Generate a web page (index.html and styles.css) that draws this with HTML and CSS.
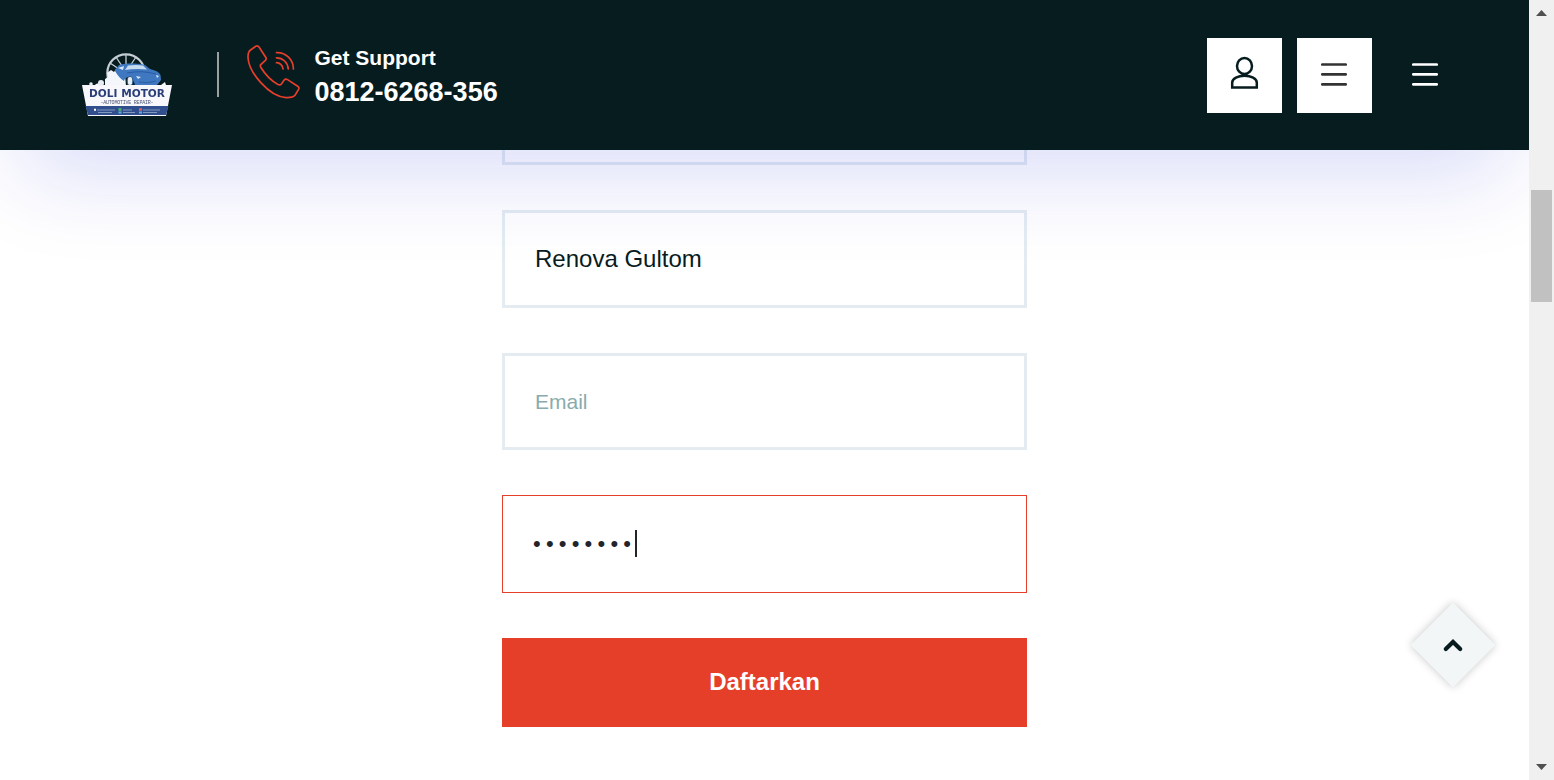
FILE: index.html
```html
<!DOCTYPE html>
<html lang="id">
<head>
<meta charset="utf-8">
<title>Doli Motor</title>
<link rel="stylesheet" href="styles.css">
</head>
<body>
<div class="page">
  <header class="header">
    <svg class="logo" width="92" height="66" viewBox="0 0 92 66">
      <g fill="none" stroke="#c5ced6">
        <circle cx="45" cy="22" r="18.7" stroke-width="2.2"/>
        <path d="M45 4v16M29 12l12 8M35 6l8 12M55 6l-8 12M26 23h14" stroke-width="1.3"/>
      </g>
      <path d="M24 35v-7l3-2-1-4 4-3 3 2 2-3 3 3 6 3 1 11z" fill="#f3f6fb"/>
      <path d="M34 19l4-5q6-2 11-1.500q10-.5 15 1.500l5 4q9 2 10.500 6l.5 5-4 5q-10 1.500-22 0-2-7-6-8-4 0-5 4-5-3-9-10z" fill="#3f78c0"/>
      <path d="M44 19l3-4.500q8-1 15 0l4 4q-12-1-22 .5z" fill="#c8dcf0"/>
      <path d="M37 17l6-2-1 4z" fill="#d9e9f7"/>
      <path d="M46 22q15-3 29 1M58 31q8 2 17-1" fill="none" stroke="#2a5ca3" stroke-width="1"/>
      <path d="M55 25l5 1-3 2zM75 24l3 1-2 2z" fill="#d9e9f7"/>
      <ellipse cx="49" cy="30" rx="2.800" ry="4.500" fill="#e8eef5" stroke="#315989"/>
      <path d="M1 34h13l1-1q4-2 6 1h59l4-3 1 3h6l-6 31H7z" fill="#f8f8fc"/>
      <circle cx="20" cy="32" r="3" fill="#e8edf4"/>
      <circle cx="10" cy="33" r="1.800" fill="#e8edf4"/>
      <path d="M4.500 55h83L85 64H7z" fill="#304f8c"/>
      <text class="logo-name" x="46" y="46" textLength="76" lengthAdjust="spacingAndGlyphs">DOLI MOTOR</text>
      <text class="logo-sub" x="46" y="52.500" textLength="53">-AUTOMOTIVE REPAIR-</text>
      <path d="M16 59h18M17 61.500h14M42 59h9M42 61.500h12M62 59h17M62 61.500h14" stroke="#8497bd" stroke-width="1"/>
      <path d="M13 58.800h2" stroke="#fff" stroke-width="2"/>
      <path d="M37.500 58.500h3" stroke="#51bd66" stroke-width="2.500"/>
      <path d="M37.500 61.500h3M58 61.500h3" stroke="#5baee0" stroke-width="2"/>
      <path d="M58 58.500h3" stroke="#df625d" stroke-width="2.500"/>
    </svg>
    <span class="divider"></span>
    <svg class="phone" width="56" height="56" viewBox="0 0 56 56">
      <path d="M4.500 6L9.800 2.300Q11.700 1.300 13 3.100L20 13.700Q20.600 15 19.400 16.300L14.800 20.500Q13.800 21.700 14.900 23.500Q22 35 32 40.500Q34.200 41.500 35.400 39.900L38 36.200Q39.400 34.500 41.200 35.400L51.700 42.200Q53.600 43.500 52.700 45.100L49.200 51Q47.200 53.800 40 53.600C23 52.800 2.600 28 2 13.500Q1.800 8 4.500 6Z"/>
      <path d="M30.500 8.600A16.200 16.200 0 0 1 47.400 25M30.500 13.800A11.500 11.500 0 0 1 42.200 25M30.500 18.700A6.500 6.500 0 0 1 37 25"/>
    </svg>
    <div class="support">
      <span class="support-label">Get Support</span>
      <span class="support-number">0812-6268-356</span>
    </div>
    <nav class="actions">
      <a class="action action-user"><svg width="32" height="36" viewBox="0 0 32 36"><ellipse cx="15.500" cy="11" rx="7.500" ry="8"/><path d="M3.200 32.400V27.500C3.200 23.300 9 20.700 15.500 20.700S27.800 23.300 27.800 27.500v4.900z"/></svg></a>
      <a class="action action-menu"><svg width="26" height="24" viewBox="0 0 26 24"><path d="M1.300 1.500h23.400M1.300 11.300h23.400M1.300 21.300h23.400"/></svg></a>
      <a class="action action-menu action-plain"><svg width="26" height="24" viewBox="0 0 26 24"><path d="M1.300 1.500h23.400M1.300 11.300h23.400M1.300 21.300h23.400"/></svg></a>
    </nav>
  </header>
  <main class="content">
    <form class="form">
      <input class="field" type="text">
      <input class="field" type="text" value="Renova Gultom">
      <input class="field" type="text" placeholder="Email">
      <div class="field field-active"><span class="dots">••••••••</span><span class="caret"></span></div>
      <button class="submit" type="button">Daftarkan</button>
    </form>
  </main>
  <a class="to-top"><svg width="22" height="16" viewBox="0 0 22 16"><path d="M3.800 12L11 5 18.200 12"/></svg></a>
</div>
<aside class="scrollbar">
  <svg class="arrow" width="11" height="6" viewBox="0 0 11 6"><path d="M5.500 0L11 6H0z"/></svg>
  <span class="thumb"></span>
  <svg class="arrow arrow-down" width="11" height="6" viewBox="0 0 11 6"><path d="M0 0h11L5.500 6z"/></svg>
</aside>
</body>
</html>
```
FILE: styles.css
```css
* { box-sizing: border-box; }
body {
  margin: 0;
  display: flex;
  height: 780px;
  overflow: hidden;
  background: #fff;
  font-family: "Liberation Sans", Arial, sans-serif;
}
.page { position: relative; width: 1529px; height: 780px; overflow: hidden; }
.header {
  position: relative;
  z-index: 2;
  display: flex;
  height: 150px;
  padding: 0 65px 0 81px;
  background: #071c1f;
  box-shadow: 0 45px 90px -20px rgba(10, 18, 205, .15);
}
.logo { margin-top: 51px; filter: blur(.5px); }
.logo-name {
  font: bold 10.5px "DejaVu Sans", sans-serif;
  fill: #293e78;
  text-anchor: middle;
}
.logo-sub { font: 5px "Liberation Mono", monospace; fill: #4c5676; text-anchor: middle; }
.divider { width: 2px; height: 45px; margin: 52px 0 0 44px; background: #9a9fa0; }
.phone { margin: 44px 0 0 27px; fill: none; stroke: #e73f2b; stroke-width: 1.7; stroke-linecap: round; }
.support { display: flex; flex-direction: column; margin: 44px 0 0 12.5px; color: #fff; font-weight: bold; }
.support-label { font-size: 21px; line-height: 28px; }
.support-number { font-size: 27px; line-height: 40px; }
.actions { display: flex; gap: 15px; margin: 38px 0 0 auto; }
.action { width: 75px; height: 75px; background: #fff; }
.action-user { display: flex; justify-content: center; padding-top: 17px; }
.action-user svg { fill: none; stroke: #071c1f; stroke-width: 2.5; }
.action-menu { display: flex; padding: 25px 0 0 24px; }
.action-menu svg { fill: none; stroke: #333; stroke-width: 2.7; stroke-linecap: round; }
.action-plain { width: 77px; padding-left: 25px; background: none; }
.action-plain svg { stroke: #fff; }
.content { display: flex; justify-content: center; }
.form { display: flex; flex-direction: column; gap: 45px; width: 525px; margin-top: -82.5px; }
.field {
  display: flex;
  align-items: center;
  width: 525px;
  height: 97.5px;
  padding: 0 30px;
  border: 3px solid #e4ecf2;
  border-radius: 0;
  outline: 0;
  background: #fff;
  color: #071c1f;
  font: 24px "Liberation Sans", Arial, sans-serif;
}
.field::placeholder { color: #8aabad; font-size: 21px; opacity: 1; }
.field-active { border: 1px solid #e53e29; }
.dots { font-size: 22px; letter-spacing: 5.2px; color: #212529; }
.caret { width: 2px; height: 27px; margin-left: -1px; background: #212529; }
.submit {
  height: 89.5px;
  padding: 0;
  border: 0;
  background: #e53e29;
  color: #fff;
  font: bold 24px "Liberation Sans", Arial, sans-serif;
}
.to-top {
  position: absolute;
  left: 1423px;
  top: 615px;
  display: flex;
  align-items: center;
  justify-content: center;
  width: 60px;
  height: 60px;
  background: #f2f6f7;
  box-shadow: 0 0 8px rgba(0, 0, 0, .22);
  transform: rotate(45deg);
}
.to-top svg { transform: rotate(-45deg); fill: none; stroke: #071c1f; stroke-width: 4.2; stroke-linecap: round; }
.scrollbar {
  display: flex;
  flex-direction: column;
  align-items: center;
  width: 25px;
  height: 780px;
  padding: 10px 0;
  background: #f0f0f0;
}
.arrow { fill: #505050; }
.arrow-down { margin-top: auto; }
.thumb { width: 21px; height: 112px; margin-top: 174px; background: #c1c1c1; }
```
